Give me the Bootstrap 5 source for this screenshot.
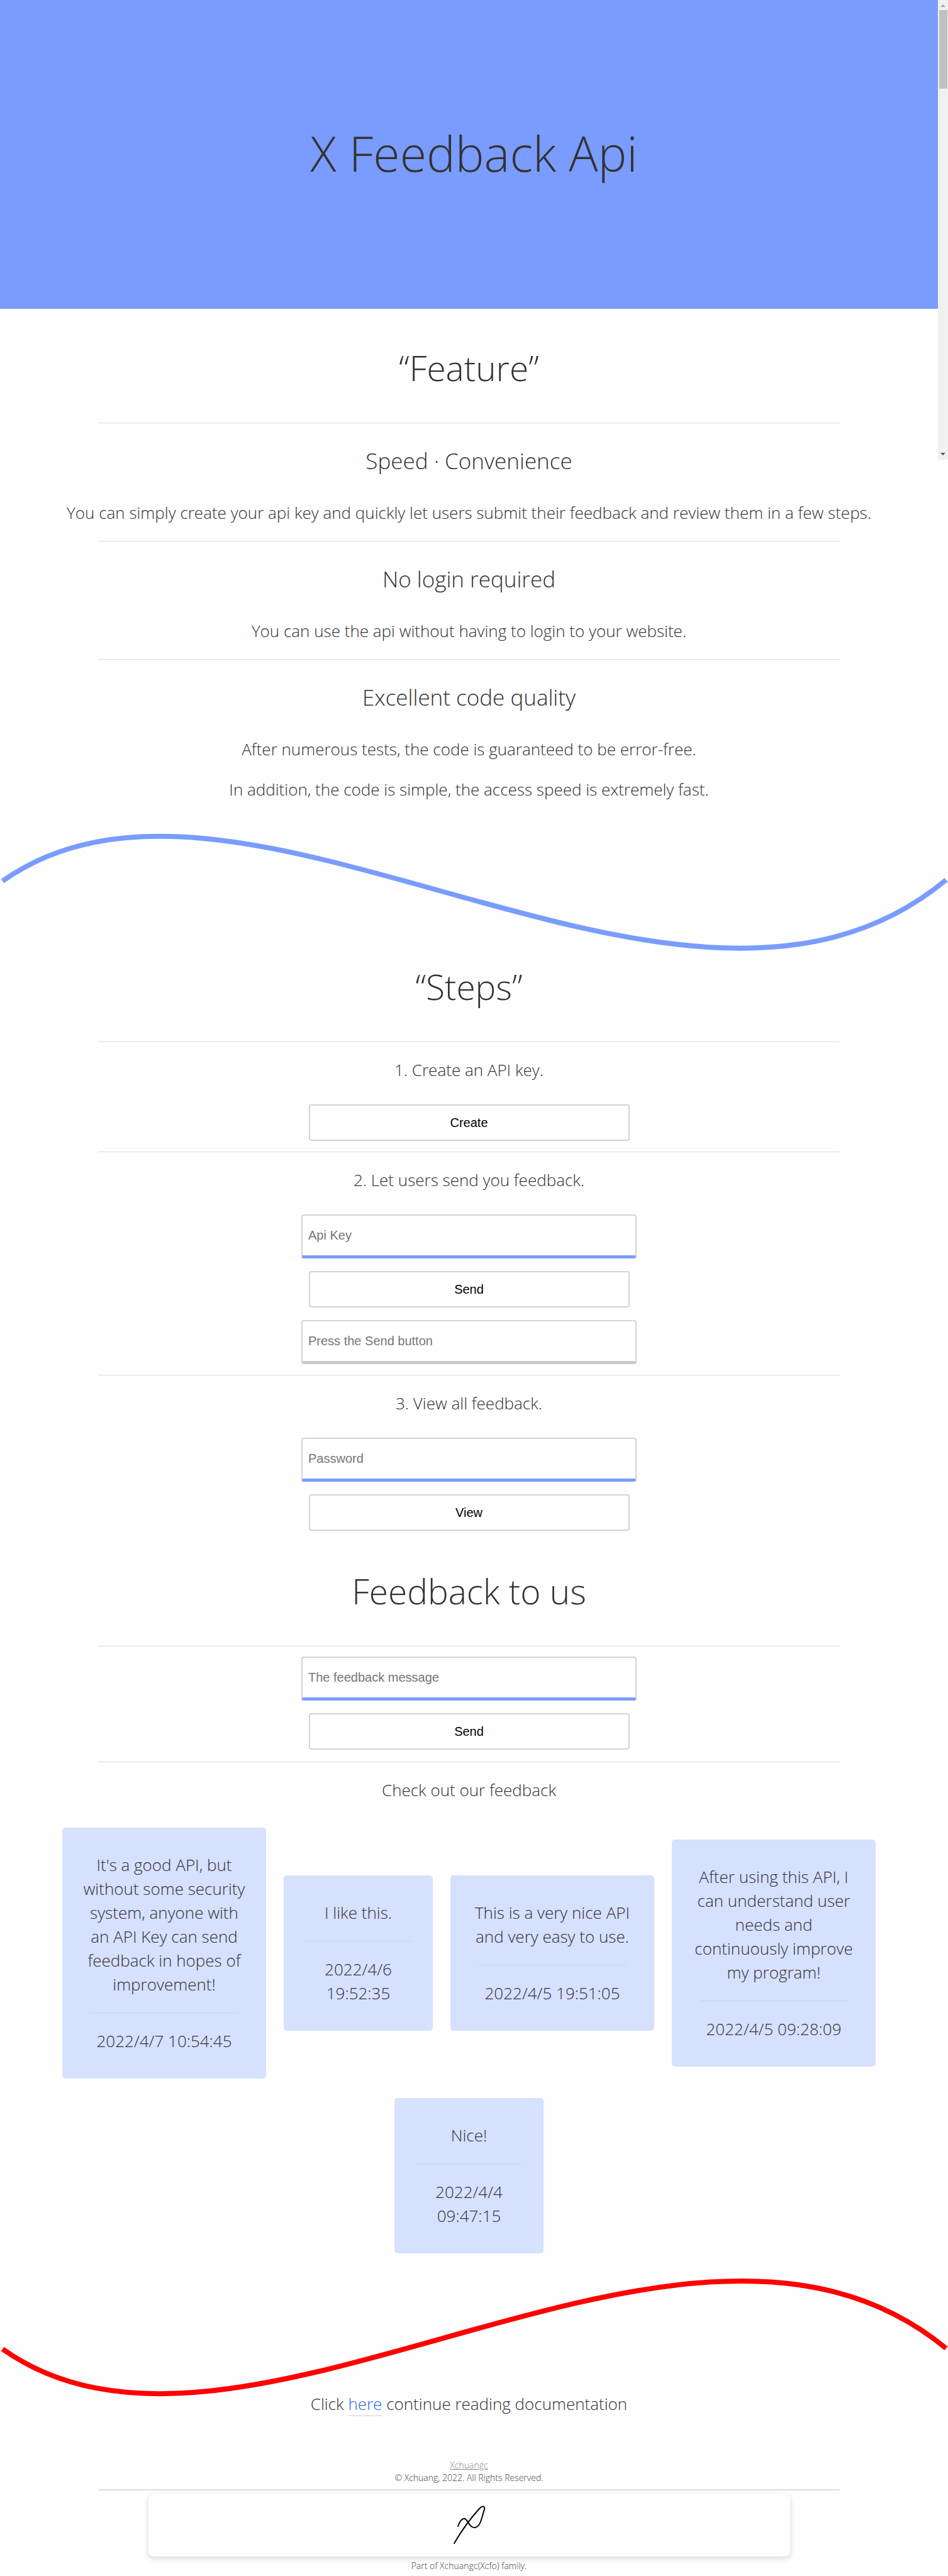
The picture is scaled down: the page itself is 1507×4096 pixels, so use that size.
<!DOCTYPE html>
<html lang="en">
<head>
<meta charset="utf-8">
<meta name="viewport" content="width=device-width, initial-scale=1">
<title>X Feedback Api</title>
<link href="https://cdn.jsdelivr.net/npm/bootstrap@5.3.0/dist/css/bootstrap.min.css" rel="stylesheet">
<style>
  body { font-family: "Open Sans", "Noto Sans", sans-serif; font-weight: 300; font-size: 26px; line-height: 38px; color: #333; background: #fefefe; overflow-x: hidden; }
  p { margin: 25px 0 26px; }
  h1, h2, h3 { font-weight: 300; }
  .hero { height: 491px; padding-bottom: 4px; background: #7a9cfe; margin-right: 16px; }
  .hero h1 { font-size: 77px; line-height: 100px; padding-left: 16px; }
  .page-body { padding: 0 25px 0 9px; }
  .rule { width: 80%; height: 1px; margin: 0 auto; border: 0; background: #dcdcdc; opacity: 1; }
  .sec-title { font-size: 55px; line-height: 80px; margin: 54px 0 47px; }
  .sub-title { font-size: 35px; line-height: 48px; margin: 36px 0 39px; }
  .feature p { margin-bottom: 26px; }
  .wave { display: block; width: 100%; height: auto; margin-top: 20px; margin-bottom: -45px; }
  .wave-blue { padding-top: 2px; }
  .wave-red { padding-top: 12px; }
  .stack { gap: 20px; padding: 10px 0 17px; }
  .stack-last { padding-bottom: 2px; }
  .stack-first { padding: 16px 0 19px; }
  .api-btn, .api-input { font-family: "Liberation Sans", Arial, sans-serif; font-size: 20px; border: 2px solid #d3d3d3; border-radius: 4px; background: #fff; }
  .api-btn { width: 510px; max-width: 96%; height: 58px; color: #000; padding: 0; line-height: 24px; }
  .api-input { width: 533px; max-width: 100%; height: 70px; padding: 0 9px; border-bottom: 5px solid #7a9cfe; }
  .api-input::placeholder { color: #757575; opacity: 1; }
  .api-output { border-bottom-color: #cacaca; }
  .notes { gap: 31px 28px; padding-top: 15px; }
  .note { width: 324px; padding: 15px 14px; border-radius: 5px; background: #d6e0ff; }
  .note-sm { width: 237px; }
  .note p { margin-left: 16px; margin-right: 16px; }
  .note .rule { background: #cad3ec; }
  .doc-link { color: #2b6cf0; text-decoration: none; border-bottom: 2px solid #e6e6e6; }
  .after-wave { padding-top: 8px; }
  .foot { font-size: 14px; line-height: 20px; padding: 43px 25px 4px 9px; color: #444; }
  .foot .rule { margin: 8px auto 6px; height: 2px; }
  .foot-link { color: #858585; }
  .sign { width: 1020px; max-width: 100%; height: 99px; margin: 0 auto 5px; border-radius: 8px; background: #fefefe; box-shadow: 0 3px 10px rgba(0,0,0,.16); }
  .scroll-track { position: absolute; top: 0; right: 0; width: 16px; height: 731px; background: #f0f0f0; }
  .scroll-thumb { width: 13px; height: 125px; background: #c1c1c1; }
</style>
</head>
<body class="text-center position-relative">
<header class="hero d-flex align-items-center justify-content-center">
  <h1 class="m-0">X Feedback Api</h1>
</header>

<main>
  <section class="page-body feature">
    <h2 class="sec-title">“Feature”</h2>
    <hr class="rule">
    <h3 class="sub-title">Speed · Convenience</h3>
    <p>You can simply create your api key and quickly let users submit their feedback and review them in a few steps.</p>
    <hr class="rule">
    <h3 class="sub-title">No login required</h3>
    <p>You can use the api without having to login to your website.</p>
    <hr class="rule">
    <h3 class="sub-title">Excellent code quality</h3>
    <p>After numerous tests, the code is guaranteed to be error-free.</p>
    <p class="mb-0 pb-4">In addition, the code is simple, the access speed is extremely fast.</p>
  </section>

  <div class="wave-blue">
    <svg class="wave" viewBox="0 0 1507 200" fill="none" stroke="#7a9cfe" stroke-width="8" aria-hidden="true"><path d="M4 81C386 -190 1088 425 1504 79"/></svg>
  </div>

  <section class="page-body">
    <h2 class="sec-title">“Steps”</h2>
    <hr class="rule">
    <p>1. Create an API key.</p>
    <div class="stack d-flex flex-column align-items-center">
      <button type="button" class="api-btn btn">Create</button>
    </div>
    <hr class="rule">
    <p>2. Let users send you feedback.</p>
    <form class="stack d-flex flex-column align-items-center">
      <input class="api-input" type="text" placeholder="Api Key" aria-label="Api Key">
      <button type="button" class="api-btn btn">Send</button>
      <input class="api-input api-output" type="text" placeholder="Press the Send button" aria-label="Result" readonly>
    </form>
    <hr class="rule">
    <p>3. View all feedback.</p>
    <form class="stack stack-last d-flex flex-column align-items-center">
      <input class="api-input" type="password" placeholder="Password" aria-label="Password">
      <button type="button" class="api-btn btn">View</button>
    </form>
  </section>

  <section class="page-body">
    <h2 class="sec-title">Feedback to us</h2>
    <hr class="rule">
    <form class="stack stack-first d-flex flex-column align-items-center">
      <input class="api-input" type="text" placeholder="The feedback message" aria-label="The feedback message">
      <button type="button" class="api-btn btn">Send</button>
    </form>
    <hr class="rule">
    <p>Check out our feedback</p>
    <div class="notes d-flex flex-wrap justify-content-center align-items-center">
      <article class="note"><p>It's a good API, but without some security system, anyone with an API Key can send feedback in hopes of improvement!</p><hr class="rule"><p>2022/4/7 10:54:45</p></article>
      <article class="note note-sm"><p>I like this.</p><hr class="rule"><p>2022/4/6 19:52:35</p></article>
      <article class="note"><p>This is a very nice API and very easy to use.</p><hr class="rule"><p>2022/4/5 19:51:05</p></article>
      <article class="note"><p>After using this API, I can understand user needs and continuously improve my program!</p><hr class="rule"><p>2022/4/5 09:28:09</p></article>
      <article class="note note-sm"><p>Nice!</p><hr class="rule"><p>2022/4/4 09:47:15</p></article>
    </div>
  </section>

  <div class="wave-red">
    <svg class="wave" viewBox="0 0 1507 200" fill="none" stroke="#f00" stroke-width="8" aria-hidden="true"><path d="M4 120C386 391 1088 -224 1504 119"/></svg>
  </div>

  <section class="page-body after-wave">
    <p>Click <a class="doc-link" href="#">here</a> continue reading documentation</p>
  </section>
</main>

<footer class="foot">
  <div><a class="foot-link" href="#">Xchuangc</a></div>
  <div>© Xchuang, 2022. All Rights Reserved.</div>
  <hr class="rule">
  <div class="sign d-flex align-items-center justify-content-center">
    <svg width="60" height="68" viewBox="0 0 60 68" fill="none" stroke="#000" stroke-width="2" stroke-linecap="round" stroke-linejoin="round" role="img" aria-label="Signature"><path d="M12 35C15 27 19 22 23 23C28 25 30 37 38 37C48 37 50 20 54 8C55 2 51 2 46 7C34 20 20 38 6 62"/></svg>
  </div>
  <div>Part of Xchuangc(Xcfo) family.</div>
</footer>

<div class="scroll-track d-flex flex-column align-items-center" aria-hidden="true">
  <svg width="16" height="16" viewBox="0 0 16 16"><path d="M4 11h8L8 7z" fill="#a3a3a3"/></svg>
  <div class="scroll-thumb"></div>
  <svg class="mt-auto" width="16" height="16" viewBox="0 0 16 16"><path d="M4 5h8L8 9z" fill="#505050"/></svg>
</div>
<script src="https://cdn.jsdelivr.net/npm/bootstrap@5.3.0/dist/js/bootstrap.bundle.min.js"></script>
</body>
</html>
